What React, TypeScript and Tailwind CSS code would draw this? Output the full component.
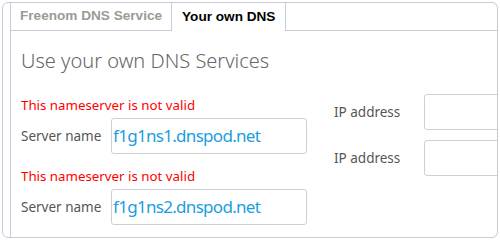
import React from "react";

const servers = ["f1g1ns1.dnspod.net", "f1g1ns2.dnspod.net"];

function ServerRow({ value, first }: { value: string; first: boolean }) {
  return (
    <div className={first ? "" : "mt-[13px]"}>
      <p className="text-[13.3px] leading-[18px] text-[#ff0000]">This nameserver is not valid</p>
      <div className="mt-[4px] flex items-center">
        <span className="w-[90px] text-[13.5px] text-[#555]">Server name</span>
        <div className="flex h-[36px] w-[196px] items-center rounded-[3px] border border-[#cfcfcf] pl-[1px] text-[17px] tracking-[-0.7px] text-[#1a9ee0]">
          {value}
        </div>
      </div>
    </div>
  );
}

function IpRow({ first }: { first: boolean }) {
  return (
    <div className={`flex items-center ${first ? "" : "mt-[10px]"}`}>
      <span className="w-[90px] text-[13.5px] text-[#555]">IP address</span>
      <div className="h-[36px] w-[196px] shrink-0 rounded-[3px] border border-[#cfcfcf]" />
    </div>
  );
}

export default function App() {
  return (
    <div className="h-[240px] w-[500px] bg-white p-[2px]" style={{ fontFamily: '"Noto Sans", sans-serif' }}>
      <div className="flex h-[236px] w-[496px] flex-col overflow-hidden rounded-[6px] border border-[#cbcad8]">
        {/* tabs */}
        <div className="flex h-[28px] shrink-0 pl-[7px]" style={{ fontFamily: '"Liberation Sans", Arial, sans-serif' }}>
          <div className="flex items-center border-x border-b border-[#cbcad8] px-[9px] text-[13.6px] font-bold text-[#9a9a9a]">
            Freenom DNS Service
          </div>
          <div className="flex items-center border-r border-[#cbcad8] px-[10px] text-[13.6px] font-bold text-black">
            Your own DNS
          </div>
          <div className="flex-1 border-b border-[#cbcad8]" />
        </div>
        {/* panel */}
        <div className="ml-[7px] flex-1 border-l border-[#cbcad8] pl-[10px]">
          <h2 className="mt-[15px] text-[20px] leading-[30px] font-light text-[#666]">Use your own DNS Services</h2>
          <div className="mt-[20px] flex">
            <div className="w-[313px] shrink-0">
              {servers.map((s, i) => (
                <ServerRow key={s} value={s} first={i === 0} />
              ))}
            </div>
            <div className="-mt-[2px]">
              <IpRow first />
              <IpRow first={false} />
            </div>
          </div>
        </div>
      </div>
    </div>
  );
}
